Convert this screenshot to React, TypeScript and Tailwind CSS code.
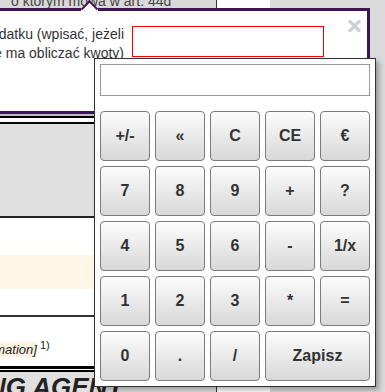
import React from "react";

const keys = [
  "+/-", "«", "C", "CE", "€",
  "7", "8", "9", "+", "?",
  "4", "5", "6", "-", "1/x",
  "1", "2", "3", "*", "=",
  "0", ".", "/",
];

function PageBehind() {
  return (
    <div className="flex h-full w-[270px] flex-col bg-white">
      <div className="flex h-[114px] shrink-0">
        <div className="w-[216px] overflow-hidden whitespace-nowrap bg-[#d9d9d9] pl-[11px] text-[14px] leading-[14px] text-[#444]">
          <div className="-mt-[6px]">o którym mowa w art. 44d</div>
        </div>
        <div className="w-px bg-[#333]" />
        <div className="flex-1 bg-white" />
      </div>
      <div className="h-[2px] shrink-0 bg-[#bdbdbd]" />
      <div className="h-[2px] shrink-0 bg-black" />
      <div className="h-[4px] shrink-0 bg-white" />
      <div className="h-[2px] shrink-0 bg-black" />
      <div className="h-[92px] shrink-0 bg-[#e0e0e0]" />
      <div className="h-[2px] shrink-0 bg-[#222]" />
      <div className="h-[37px] shrink-0 bg-white" />
      <div className="h-[34px] shrink-0 bg-[#fef6e7]" />
      <div className="h-[26px] shrink-0 bg-white" />
      <div className="h-[2px] shrink-0 bg-[#333]" />
      <div className="h-[49px] shrink-0 whitespace-nowrap bg-white pt-[25px] text-[13px] leading-[15px] text-[#222]">
        <span className="-ml-[31px] bg-[#fdf3e1] italic">information]</span>
        <sup className="ml-[3px] text-[11px]">1)</sup>
      </div>
      <div className="h-[3px] shrink-0 bg-black" />
      <div className="h-px shrink-0 bg-white" />
      <div className="h-[2px] shrink-0 bg-black" />
      <div className="flex flex-1">
        <div className="w-[216px] overflow-hidden whitespace-nowrap bg-[#e0e0e0] pt-[2px] text-[26px] font-bold italic leading-[26px] text-[#222]">
          <div className="-ml-[13px]">NG AGENT</div>
        </div>
        <div className="w-px bg-[#333]" />
        <div className="flex-1 bg-white" />
      </div>
    </div>
  );
}

function Tooltip() {
  return (
    <div className="absolute left-[-10px] top-[8px] h-[106px] w-[380px] border-[3px] border-[#3d1457] bg-white">
      <div className="flex pt-[14px]">
        <div className="flex w-[131px] shrink-0 flex-col items-end overflow-hidden whitespace-nowrap text-[14px] leading-[19px] text-[#333]">
          <div>podatku (wpisać, jeżeli</div>
          <div>płatnik nie ma obliczać kwoty)</div>
        </div>
        <div className="ml-[8px] mt-[1px] h-[31px] w-[192px] border border-[#ff0000] bg-white" />
      </div>
      <svg
        className="absolute right-[6px] top-[9px]"
        width="13"
        height="12"
        viewBox="0 0 13 12"
      >
        <path d="M2 1.5 L11 10.5 M11 1.5 L2 10.5" stroke="#cfcfcf" strokeWidth="3.2" strokeLinecap="square" />
      </svg>
    </div>
  );
}

function Pointer() {
  return (
    <svg className="absolute left-[81px] top-0" width="17" height="12" viewBox="0 0 17 12">
      <path d="M0 12 L0 9 L8.5 0.8 L17 9 L17 12 Z" fill="#ffffff" />
      <path d="M0.5 9.6 L8.5 1.2 L16.5 9.6" fill="none" stroke="#3d1457" strokeWidth="2" />
    </svg>
  );
}

function CalcKey({ label, wide }: { label: string; wide?: boolean }) {
  return (
    <button
      className={
        "flex h-[50px] items-center justify-center rounded-[4px] border border-[#7b7b7b] bg-gradient-to-b from-[#fcfcfc] to-[#d8d8d8] text-[16px] font-bold text-[#333] " +
        (wide ? "col-span-2" : "")
      }
    >
      {label}
    </button>
  );
}

function Calculator() {
  return (
    <div className="absolute left-[94px] top-[58px] w-[282px] border border-[#333] bg-white p-[5px] shadow-[3px_3px_5px_rgba(0,0,0,0.3)]">
      <div className="h-[32px] border border-[#999] bg-white" />
      <div className="mt-[15px] grid grid-cols-[repeat(5,50px)] grid-rows-[repeat(5,50px)] gap-[5px]">
        {keys.map((k) => (
          <CalcKey key={k} label={k} />
        ))}
        <CalcKey label="Zapisz" wide />
      </div>
    </div>
  );
}

export default function App() {
  return (
    <div className="relative h-[392px] w-[385px] overflow-hidden bg-[#dadada] font-['Liberation_Sans',Arial,sans-serif]">
      <PageBehind />
      <Tooltip />
      <Pointer />
      <Calculator />
    </div>
  );
}
